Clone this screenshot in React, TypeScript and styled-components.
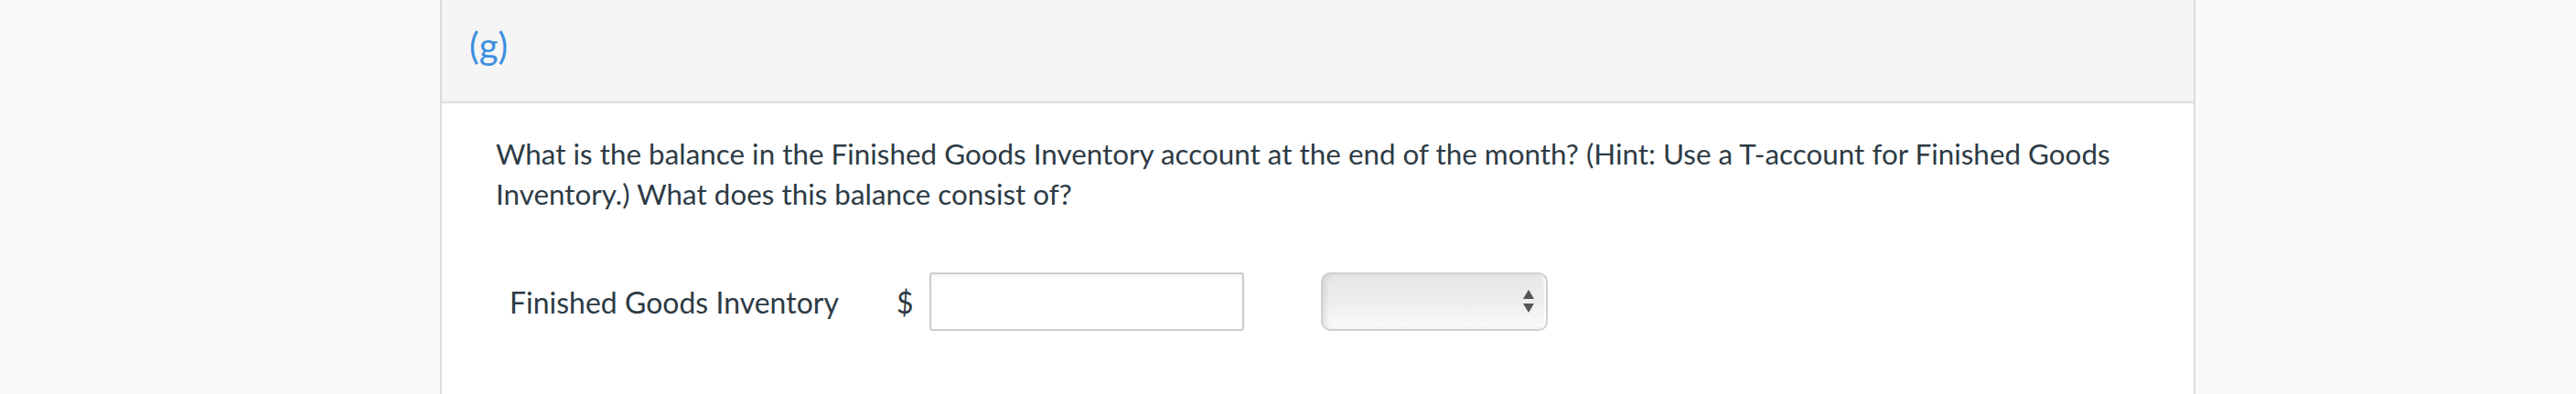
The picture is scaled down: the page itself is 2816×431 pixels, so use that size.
import { FC } from "react";
import styled, { createGlobalStyle } from "styled-components";

const GlobalStyle = createGlobalStyle`
  html, body {
    margin: 0;
    padding: 0;
    background: #fafafa;
    font-family: Lato, "Open Sans", "Liberation Sans", sans-serif;
  }
`;

const Page = styled.div`
  display: flex;
  min-height: 100vh;
  padding-left: 481px;
`;

const Panel = styled.section`
  width: 1915px;
  min-height: 100vh;
  background: #fff;
  border-left: 2px solid #dcdcdc;
  border-right: 2px solid #dcdcdc;
  display: flex;
  flex-direction: column;
`;

const Header = styled.header`
  height: 113px;
  background: #f5f5f5;
  border-bottom: 2px solid #dedede;
  padding-left: 30px;
  display: flex;
  align-items: center;
  box-sizing: border-box;
`;

const PartLabel = styled.span`
  color: #3b8ee0;
  font-size: 40px;
  line-height: 1;
  margin-top: -12px;
`;

const Body = styled.div`
  padding: 33px 59px 0;
  color: #2d3b45;
`;

const Question = styled.p`
  margin: 0;
  font-size: 31.4px;
  line-height: 44px;
`;

const AnswerRow = styled.div`
  display: flex;
  align-items: center;
  margin-top: 64px;
  padding-left: 15px;
`;

const RowLabel = styled.span`
  width: 423px;
  font-size: 32px;
`;

const Currency = styled.span`
  font-size: 32px;
  margin-right: 17px;
`;

const AmountInput = styled.input`
  box-sizing: border-box;
  width: 344px;
  height: 64px;
  border: 2px solid #cdcdcd;
  border-radius: 3px;
  box-shadow: inset 0 3px 4px rgba(0, 0, 0, 0.05);
  background: #fff;
  font: inherit;
  font-size: 32px;
  padding: 0 12px;
  outline: none;
`;

const SelectBox = styled.div`
  box-sizing: border-box;
  width: 248px;
  height: 64px;
  margin-left: 84px;
  border: 2px solid #cfcfcf;
  border-radius: 10px;
  background: linear-gradient(#e6e6e6, #f0f0f0 60%, #fbfbfb);
  box-shadow: inset 4px 0 5px rgba(0, 0, 0, 0.08),
    inset -2px 0 2px rgba(255, 255, 255, 0.9);
  display: flex;
  align-items: center;
  justify-content: flex-end;
  padding-right: 12px;
`;

const Arrows: FC = () => (
  <svg width="14" height="28" viewBox="0 0 14 28">
    <polygon points="7,1 13,11 1,11" fill="#555" />
    <polygon points="1,16 13,16 7,26" fill="#555" />
  </svg>
);

export default function App() {
  return (
    <>
      <GlobalStyle />
      <Page>
        <Panel>
          <Header>
            <PartLabel>(g)</PartLabel>
          </Header>
          <Body>
            <Question>
              What is the balance in the Finished Goods Inventory account at the
              end of the month? (Hint: Use a T-account for Finished Goods
              Inventory.) What does this balance consist of?
            </Question>
            <AnswerRow>
              <RowLabel>Finished Goods Inventory</RowLabel>
              <Currency>$</Currency>
              <AmountInput type="text" />
              <SelectBox>
                <Arrows />
              </SelectBox>
            </AnswerRow>
          </Body>
        </Panel>
      </Page>
    </>
  );
}
